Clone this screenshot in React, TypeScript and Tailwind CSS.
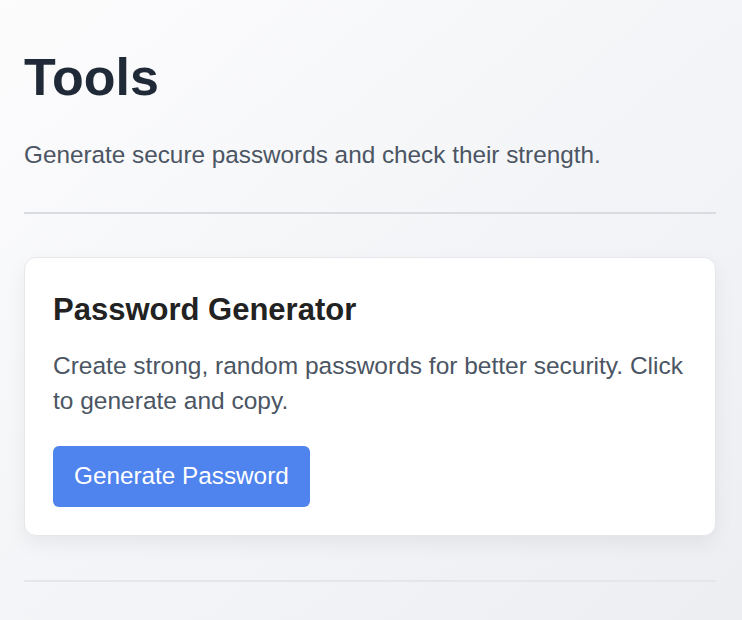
import React from "react";

export default function App() {
  return (
    <div
      className="min-h-[620px] w-full bg-gradient-to-br from-[#fcfcfd] to-[#eceef2] pl-6 pr-[26px]"
      style={{ fontFamily: '"Liberation Sans", Arial, Helvetica, sans-serif' }}
    >
      <h1 className="pt-[51px] text-[52px] font-bold leading-[52px] text-[#1f2937]">Tools</h1>
      <p className="mt-[36px] text-[24.3px] leading-[32px] text-[#4b5563]">
        Generate secure passwords and check their strength.
      </p>
      <div className="mt-[41px] h-[2px] bg-[#d9dbe0]" />
      <div className="mt-[43px] rounded-xl border border-[#e5e7eb] bg-white px-7 pt-[34px] pb-7 shadow-[0_8px_20px_rgba(0,0,0,0.06)]">
        <h2 className="text-[31px] font-bold leading-[36px] text-[#222222]">Password Generator</h2>
        <p className="mt-[20px] text-[24.5px] leading-[35px] text-[#4b5563]">
          Create strong, random passwords for better security. Click to generate and copy.
        </p>
        <button className="mt-[28px] flex h-[61px] items-center rounded-md bg-[#4f83ee] px-[21px] text-[24.3px] text-white">
          Generate Password
        </button>
      </div>
      <div className="mt-[44px] h-[2px] bg-[#e4e6ea]" />
    </div>
  );
}
